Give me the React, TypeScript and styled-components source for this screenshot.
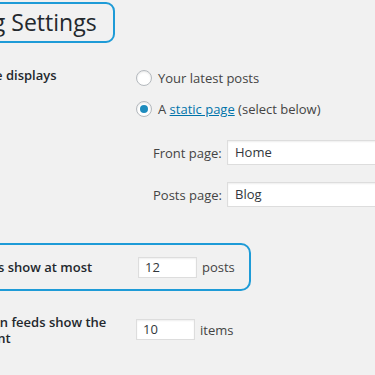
import { createGlobalStyle, styled } from "styled-components";

const GlobalStyle = createGlobalStyle`
  html, body {
    margin: 0;
    padding: 0;
    background: #f1f1f1;
  }
  body {
    font-family: "Open Sans", "Noto Sans", sans-serif;
    font-size: 13px;
    color: #444;
  }
`;

const Screen = styled.div`
  width: 375px;
  height: 375px;
  overflow: hidden;
  background: #f1f1f1;
`;

const Page = styled.div`
  margin-left: -65px;
  width: 620px;
  padding-top: 2px;
`;

const TitleBox = styled.div`
  display: inline-block;
  box-sizing: border-box;
  height: 41px;
  margin-left: -30px;
  padding: 0 16px 0 12px;
  border: 2px solid #1e9bd7;
  border-radius: 9px;
`;

const Title = styled.h1`
  margin: 0;
  font-size: 23px;
  font-weight: 400;
  line-height: 37px;
  color: #23282d;
  white-space: nowrap;
`;

const Row = styled.div<{ $top: number }>`
  display: flex;
  align-items: flex-start;
  margin-top: ${(p) => p.$top}px;
`;

const HighlightRow = styled.div<{ $top: number }>`
  display: inline-flex;
  align-items: center;
  box-sizing: border-box;
  height: 48px;
  margin-top: ${(p) => p.$top}px;
  margin-left: -20px;
  padding: 0 14px 0 20px;
  border: 2px solid #1e9bd7;
  border-radius: 10px;
`;

const Label = styled.div<{ $offset?: number }>`
  width: 201px;
  flex: none;
  font-weight: 600;
  line-height: 16px;
  color: #23282d;
  margin-top: ${(p) => p.$offset ?? 0}px;
`;

const Field = styled.div<{ $offset?: number }>`
  display: flex;
  flex-direction: column;
  margin-top: ${(p) => p.$offset ?? 0}px;
`;

const Option = styled.label`
  display: flex;
  align-items: center;
  height: 22px;
  gap: 6px;
  color: #444;
  white-space: nowrap;
  & + & {
    margin-top: 9px;
  }
`;

const Radio = styled.span<{ $checked?: boolean }>`
  position: relative;
  box-sizing: border-box;
  width: 16px;
  height: 16px;
  border: 1px solid #b4b9be;
  border-radius: 50%;
  background: #fff;
  box-shadow: inset 0 1px 2px rgba(0, 0, 0, 0.1);
  &::after {
    content: "";
    display: ${(p) => (p.$checked ? "block" : "none")};
    position: absolute;
    left: 3px;
    top: 3px;
    width: 8px;
    height: 8px;
    border-radius: 50%;
    background: #1e8cbe;
  }
`;

const Link = styled.a`
  color: #0073aa;
  text-decoration: underline;
`;

const SubRow = styled.div<{ $top: number }>`
  display: flex;
  align-items: center;
  margin-top: ${(p) => p.$top}px;
  margin-left: 17px;
`;

const SubLabel = styled.span`
  width: 74px;
  flex: none;
  color: #444;
  white-space: nowrap;
`;

const SelectBox = styled.div`
  box-sizing: border-box;
  width: 200px;
  height: 25px;
  padding: 0 7px;
  line-height: 23px;
  background: #fff;
  border: 1px solid #ddd;
  box-shadow: inset 0 1px 2px rgba(0, 0, 0, 0.07);
  color: #32373c;
`;

const Inline = styled.div`
  display: flex;
  align-items: center;
  gap: 5px;
`;

const SmallInput = styled.div`
  box-sizing: border-box;
  width: 59px;
  height: 21px;
  padding: 0 6px;
  line-height: 19px;
  background: #fff;
  border: 1px solid #ddd;
  box-shadow: inset 0 1px 2px rgba(0, 0, 0, 0.07);
  color: #32373c;
`;

const Unit = styled.span`
  color: #444;
`;

export default function App() {
  return (
    <Screen>
      <GlobalStyle />
      <Page>
        <TitleBox>
          <Title>Reading Settings</Title>
        </TitleBox>

        <Row $top={22}>
          <Label $offset={2}>Front page displays</Label>
          <Field $offset={2}>
            <Option>
              <Radio />
              Your latest posts
            </Option>
            <Option>
              <Radio $checked />
              <span>
                A <Link>static page</Link> (select below)
              </span>
            </Option>
            <SubRow $top={20}>
              <SubLabel>Front page:</SubLabel>
              <SelectBox>Home</SelectBox>
            </SubRow>
            <SubRow $top={17}>
              <SubLabel>Posts page:</SubLabel>
              <SelectBox>Blog</SelectBox>
            </SubRow>
          </Field>
        </Row>

        <HighlightRow $top={36}>
          <Label>Blog pages show at most</Label>
          <Inline>
            <SmallInput>12</SmallInput>
            <Unit>posts</Unit>
          </Inline>
        </HighlightRow>

        <Row $top={23}>
          <Label>Syndication feeds show the most recent</Label>
          <Field $offset={5}>
            <Inline>
              <SmallInput>10</SmallInput>
              <Unit>items</Unit>
            </Inline>
          </Field>
        </Row>
      </Page>
    </Screen>
  );
}
